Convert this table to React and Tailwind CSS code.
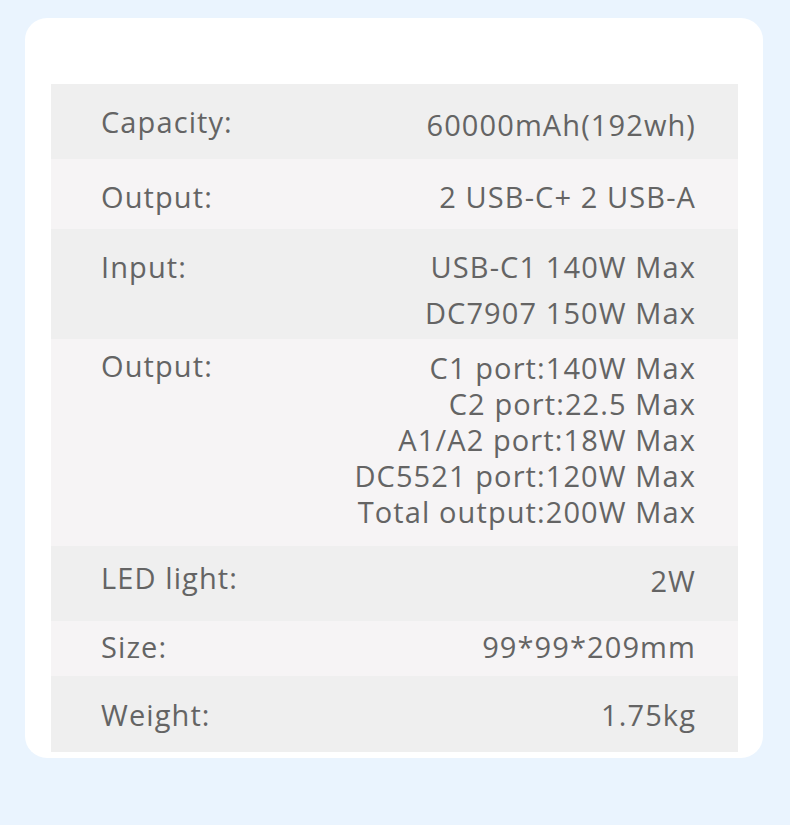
import React from 'react';

// Spec rows: h = row height, pt = top padding of the label line, vt = extra offset for the value
const specs = [
    { label: 'Capacity:', values: ['60000mAh(192wh)'], h: 'h-[75px]', pt: 'pt-[20px]', vt: 'pt-[3px]', bg: 'bg-[#efefef]' },
    { label: 'Output:', values: ['2 USB-C+ 2 USB-A'], h: 'h-[70px]', pt: 'pt-[20px]', vt: 'pt-0', bg: 'bg-[#f6f4f5]' },
    { label: 'Input:', values: ['USB-C1 140W Max', 'DC7907 150W Max'], h: 'h-[110px]', pt: 'pt-[20px]', vt: 'pt-0', bg: 'bg-[#efefef]', gap: 'gap-[10px]' },
    {
        label: 'Output:',
        values: ['C1 port:140W Max', 'C2 port:22.5 Max', 'A1/A2 port:18W Max', 'DC5521 port:120W Max', 'Total output:200W Max'],
        h: 'h-[207px]', pt: 'pt-[9px]', vt: 'pt-[2px]', bg: 'bg-[#f6f4f5]',
    },
    { label: 'LED light:', values: ['2W'], h: 'h-[75px]', pt: 'pt-[14px]', vt: 'pt-[3px]', bg: 'bg-[#efefef]' },
    { label: 'Size:', values: ['99*99*209mm'], h: 'h-[55px]', pt: 'pt-[8px]', vt: 'pt-0', bg: 'bg-[#f6f4f5]' },
    { label: 'Weight:', values: ['1.75kg'], h: 'h-[76px]', pt: 'pt-[21px]', vt: 'pt-0', bg: 'bg-[#efefef]' },
];

const App = () => {
    return (
        <div className="min-h-[825px] w-[790px] bg-[#eaf4fe] pt-[18px] pl-[25px] font-['Open_Sans',sans-serif] text-[29px] leading-[36px] tracking-[1.1px] text-[#646464]">
            <div className="w-[738px] rounded-[22px] bg-white pt-[66px] pb-[6px] pl-[26px] pr-[25px]">
                {specs.map((row, i) => (
                    <div key={i} className={`flex justify-between pl-[50px] pr-[43px] ${row.h} ${row.pt} ${row.bg}`}>
                        <p>{row.label}</p>
                        <div className={`flex flex-col items-end ${row.vt} ${row.gap || ''}`}>
                            {row.values.map((v) => (
                                <p key={v} className="-mr-[1px]">{v}</p>
                            ))}
                        </div>
                    </div>
                ))}
            </div>
        </div>
    );
};

export default App;
